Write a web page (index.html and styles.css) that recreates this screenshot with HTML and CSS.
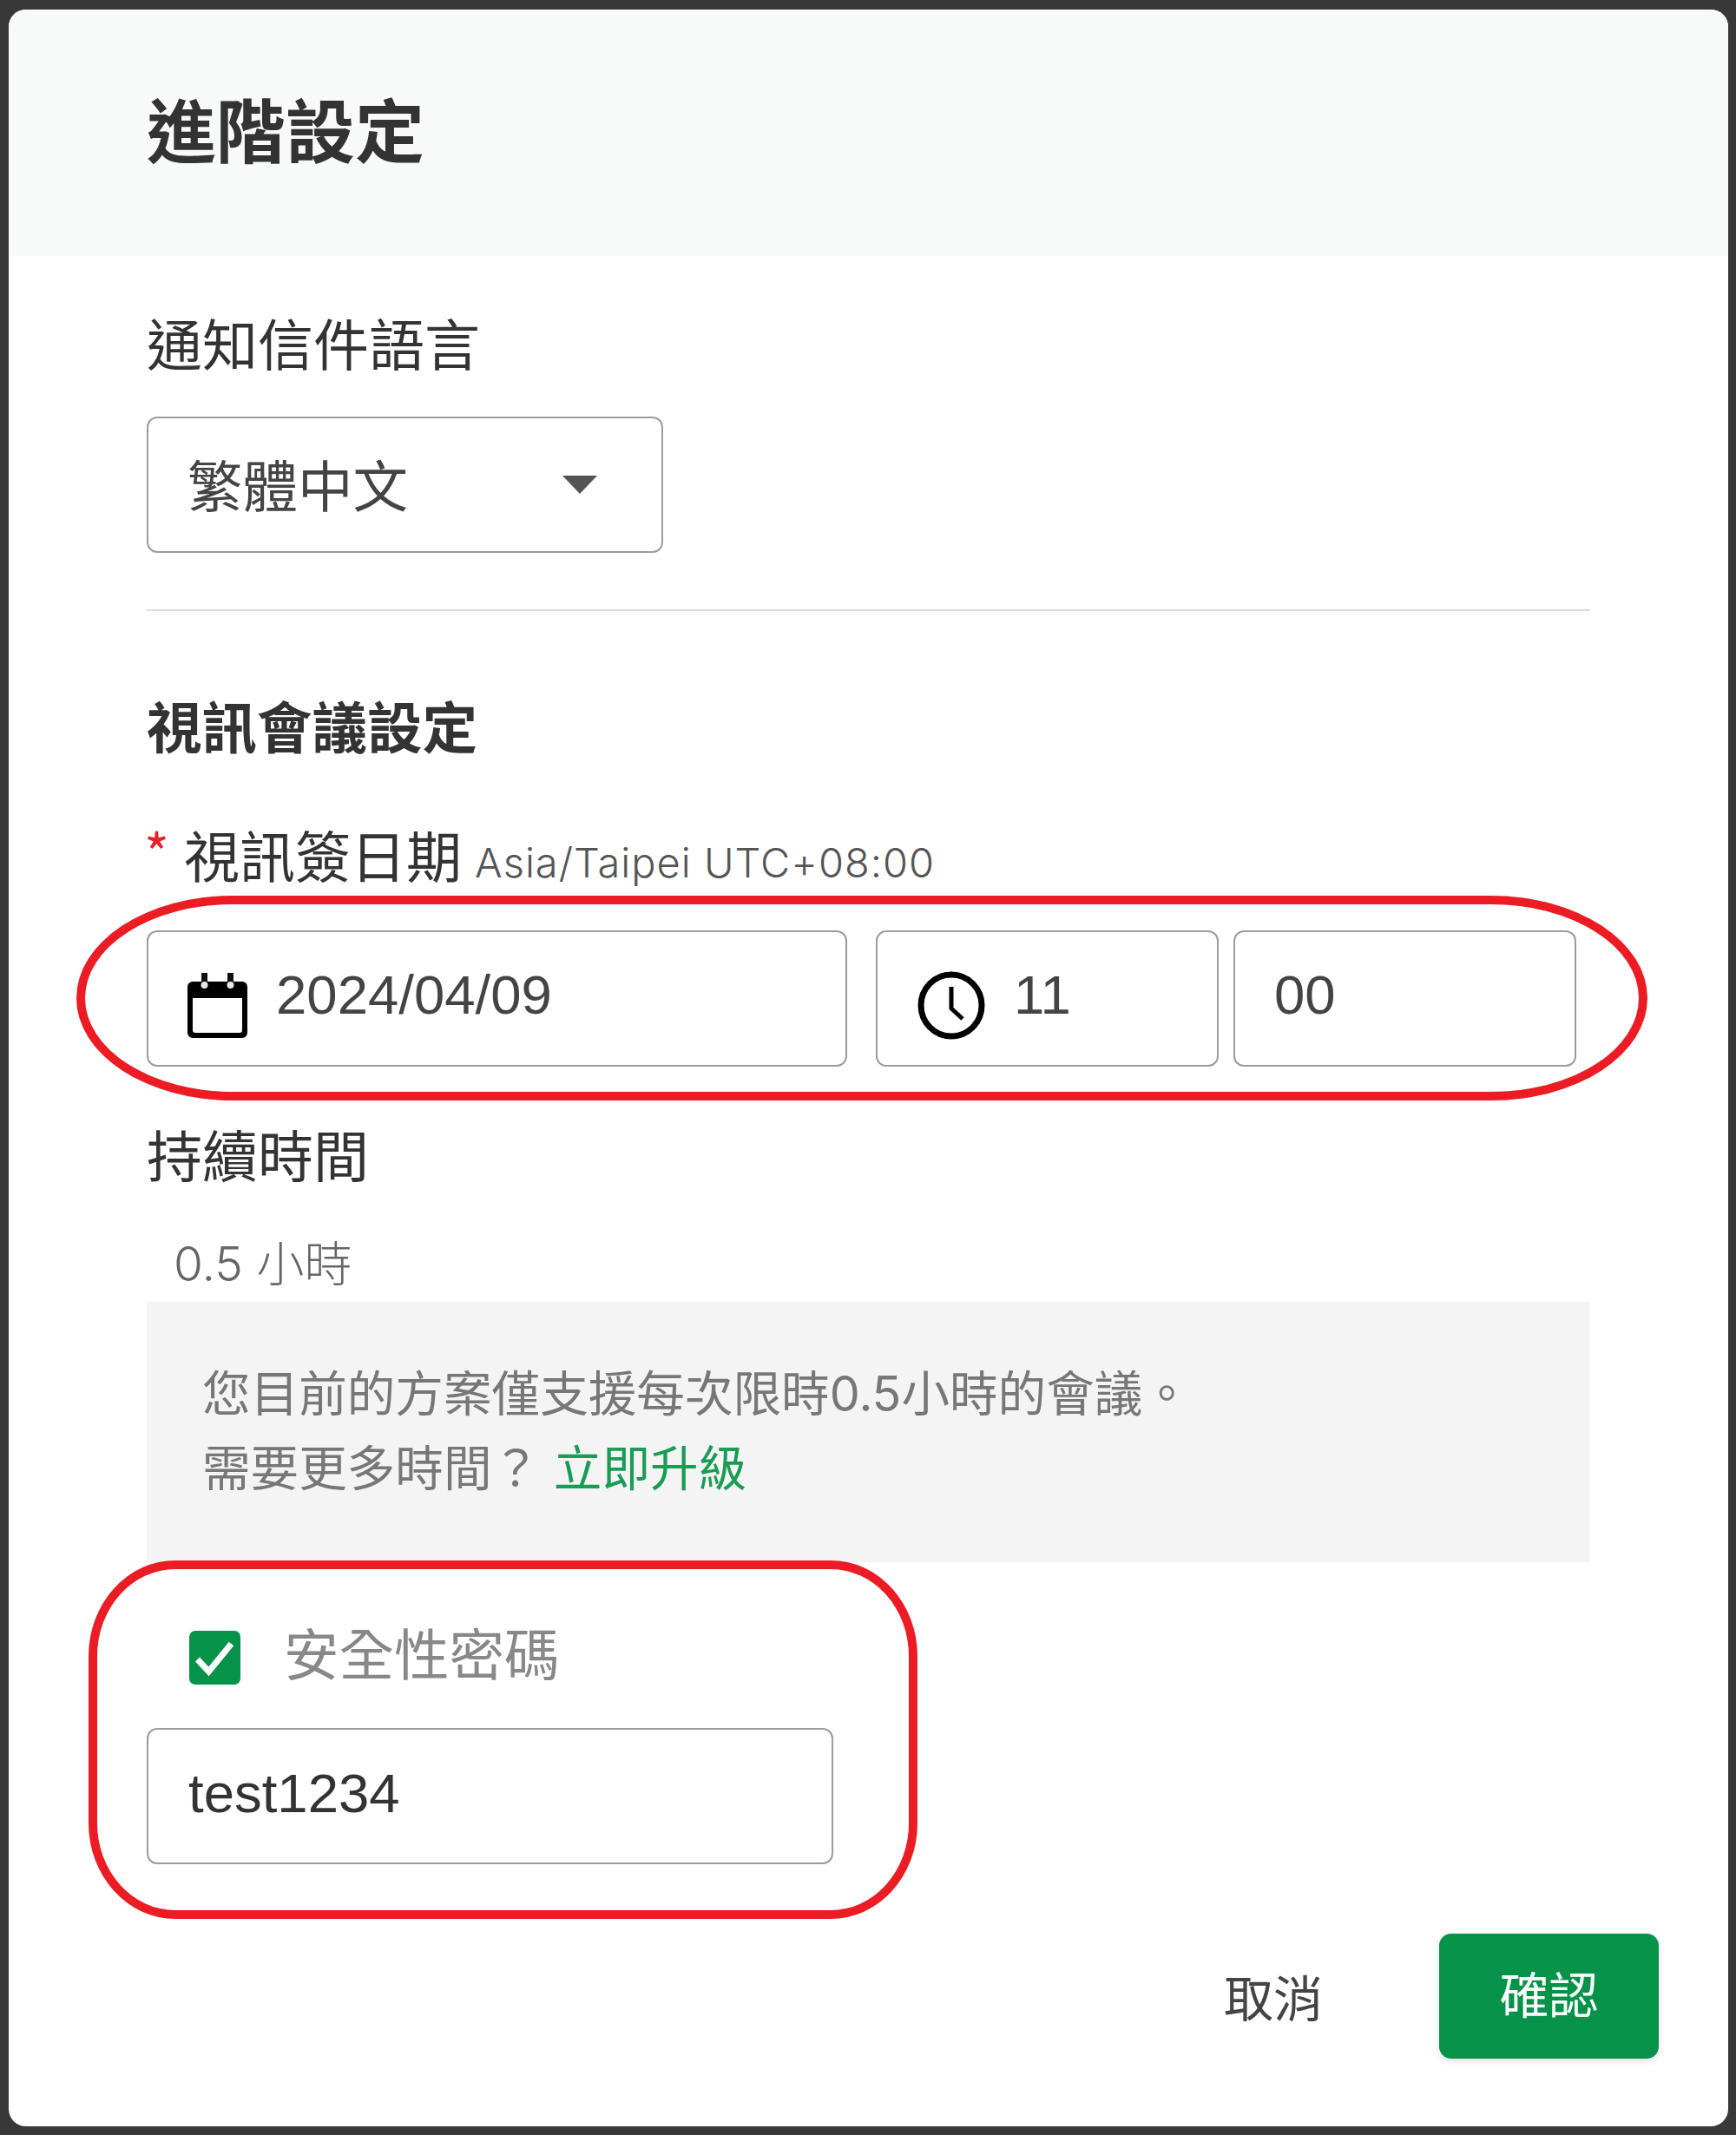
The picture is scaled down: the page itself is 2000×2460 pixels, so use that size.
FILE: index.html
```html
<!DOCTYPE html>
<html lang="zh-Hant">
<head>
<meta charset="utf-8">
<title>進階設定</title>
<link rel="stylesheet" href="styles.css">
</head>
<body>
<main class="modal">
  <header class="modal-head"><h1 class="modal-title">進階設定</h1></header>
  <section class="modal-body">
    <div class="label lang-label">通知信件語言</div>
    <div class="field select">
      <span class="select-text">繁體中文</span>
      <span class="caret"></span>
    </div>
    <hr class="divider">
    <h2 class="section-title">視訊會議設定</h2>
    <div class="label date-label"><span class="star">*</span><span>視訊簽日期</span><span class="tz">Asia/Taipei UTC+08:00</span></div>
    <div class="date-row">
      <div class="field date">
        <svg class="ico-cal" viewBox="0 0 69 75" aria-hidden="true">
          <path d="M16 0h7v10h-7zM46 0h7v10h-7z" fill="#111"/>
          <path fill-rule="evenodd" d="M6 10h57a6 6 0 0 1 6 6v53a6 6 0 0 1-6 6H6a6 6 0 0 1-6-6V16a6 6 0 0 1 6-6zM6 29v37a3 3 0 0 0 3 3h51a3 3 0 0 0 3-3V29z" fill="#000"/>
          <circle cx="19.500" cy="14" r="4" fill="#e8e8e8"/>
          <circle cx="49.500" cy="14" r="4" fill="#e8e8e8"/>
        </svg>
        <span class="num">2024/04/09</span>
      </div>
      <div class="field hour">
        <svg class="ico-clock" viewBox="0 0 78 79" aria-hidden="true">
          <ellipse cx="39" cy="39.500" rx="35" ry="35.500" fill="none" stroke="#000" stroke-width="7"/>
          <path d="M39 18v25l13 12" fill="none" stroke="#000" stroke-width="5"/>
        </svg>
        <span class="num">11</span>
      </div>
      <div class="field minute"><span class="num">00</span></div>
    </div>
    <div class="label dur-label">持續時間</div>
    <div class="dur-value">0.5 小時</div>
    <div class="notice">
      <div>您目前的方案僅支援每次限時0.5小時的會議。</div>
      <div>需要更多時間？ <a class="upgrade" href="#">立即升級</a></div>
    </div>
    <div class="check-row">
      <span class="checkbox">
        <svg viewBox="0 0 58 62" aria-hidden="true"><path d="M9 33l13 14L48 15" fill="none" stroke="#fff" stroke-width="7"/></svg>
      </span>
      <span class="check-label">安全性密碼</span>
    </div>
    <div class="field password"><span class="num pw">test1234</span></div>
  </section>
  <footer class="modal-foot">
    <button class="btn-cancel" type="button"><span class="btn-text cancel-text">取消</span></button>
    <button class="btn-ok" type="button"><span class="btn-text">確認</span></button>
  </footer>
  <div class="mark mark-date"></div>
  <div class="mark mark-pass"></div>
</main>
</body>
</html>
```
FILE: styles.css
```css
* { box-sizing: border-box; }
html, body { margin: 0; padding: 0; }
body {
  width: 2000px;
  height: 2460px;
  background: #383838;
  font-family: "Inter", "Noto Sans CJK TC", sans-serif;
  overflow: hidden;
  padding: 11px 9px 10px 10px;
}
.modal {
  position: relative;
  height: 2439px;
  background: #fff;
  border-radius: 20px;
  overflow: hidden;
}
.modal-head {
  height: 284px;
  background: #f8f9f9;
  padding: 90px 159px 0;
}
.modal-title {
  margin: 0;
  font-family: "Noto Sans CJK TC", sans-serif;
  font-size: 80px;
  line-height: 90px;
  font-weight: 700;
  color: #333;
}
.modal-body { padding: 0 159px; }
.label {
  font-family: "Noto Sans CJK TC", sans-serif;
  font-size: 64px;
  line-height: 90px;
  color: #333;
}
.lang-label { margin-top: 53px; margin-bottom: 42px; }
.field {
  display: flex;
  align-items: center;
  height: 157px;
  background: #fff;
  border: 2px solid #9c9c9c;
  border-radius: 12px;
  color: #444;
}
.select {
  width: 595px;
  padding: 0 74px 0 45px;
  justify-content: space-between;
  font-family: "Noto Sans CJK TC", sans-serif;
  font-size: 63.500px;
}
.select-text { position: relative; top: -3px; }
.caret {
  width: 0;
  height: 0;
  border-left: 20px solid transparent;
  border-right: 20px solid transparent;
  border-top: 21px solid #555;
}
.divider {
  margin: 65px 0 0;
  height: 2px;
  border: 0;
  background: #ddd;
}
.section-title {
  margin: 85px 0 0;
  font-family: "Noto Sans CJK TC", sans-serif;
  font-size: 63.500px;
  line-height: 90px;
  font-weight: 700;
  color: #333;
}
.date-label {
  margin-top: 59px;
  height: 90px;
  display: flex;
  align-items: baseline;
}
.star {
  width: 46px;
  margin-left: -3px;
  color: #e8202a;
  font-size: 62px;
  line-height: 80px;
  position: relative;
  top: -4px;
}
.tz {
  margin-left: 15px;
  font-family: "Inter", sans-serif;
  font-size: 47px;
  font-weight: 300;
  letter-spacing: 1px;
  color: #555;
}
.date-row {
  display: flex;
  margin-top: 44px;
}
.date { width: 807px; padding-left: 45px; }
.hour { width: 395px; margin-left: 33px; padding-left: 46px; }
.minute { width: 395px; margin-left: 17px; padding-left: 45px; }
.num {
  font-family: "Liberation Sans", sans-serif;
  font-size: 63.500px;
  line-height: 90px;
  position: relative;
  top: -5px;
}
.ico-cal { width: 69px; height: 75px; margin-right: 33px; position: relative; top: 8px; flex: none; }
.ico-clock { width: 78px; height: 79px; margin-right: 33px; position: relative; top: 8px; flex: none; }
.dur-label { margin-top: 54px; }
.dur-value {
  margin-top: 38px;
  padding-left: 31px;
  font-size: 55px;
  font-weight: 300;
  line-height: 90px;
  color: #666;
}
.notice {
  margin-top: -1px;
  height: 300px;
  padding: 63px 64px 0;
  background: #f4f4f4;
  font-size: 55.600px;
  line-height: 86px;
  color: #777;
}
.upgrade { color: #1a9c55; text-decoration: none; }
.check-row {
  margin-top: 70px;
  height: 80px;
  display: flex;
  align-items: center;
  padding-left: 49px;
}
.checkbox {
  width: 59px;
  height: 62px;
  background: #069249;
  border-radius: 7px;
  display: block;
  flex: none;
}
.checkbox svg { display: block; width: 100%; height: 100%; }
.check-label {
  margin-left: 50px;
  margin-bottom: 16px;
  font-family: "Noto Sans CJK TC", sans-serif;
  font-size: 63.500px;
  color: #888;
}
.password {
  margin-top: 41px;
  width: 791px;
  padding-left: 46px;
}
.pw { color: #333; top: -4px; }
.modal-foot {
  display: flex;
  justify-content: flex-end;
  align-items: center;
  margin-top: 80px;
  padding-right: 80px;
}
.btn-cancel, .btn-ok {
  font-family: "Noto Sans CJK TC", sans-serif;
  font-size: 57px;
  border: 0;
  padding: 0;
  cursor: pointer;
}
.btn-text { position: relative; top: -5px; }
.cancel-text { top: -1px; }
.btn-cancel {
  width: 232px;
  height: 144px;
  margin-right: 75px;
  background: transparent;
  color: #444;
}
.btn-ok {
  width: 253px;
  height: 144px;
  background: #069249;
  color: #fff;
  border-radius: 14px;
  box-shadow: 0 3px 8px rgba(0,0,0,.12);
}
.mark {
  position: absolute;
  border: 10px solid #ec1c24;
  pointer-events: none;
}
.mark-date {
  left: 78px;
  top: 1021px;
  width: 1810px;
  height: 236px;
  border-radius: 180px / 118px;
}
.mark-pass {
  left: 92px;
  top: 1787px;
  width: 955px;
  height: 413px;
  border-radius: 100px / 110px;
}
```
